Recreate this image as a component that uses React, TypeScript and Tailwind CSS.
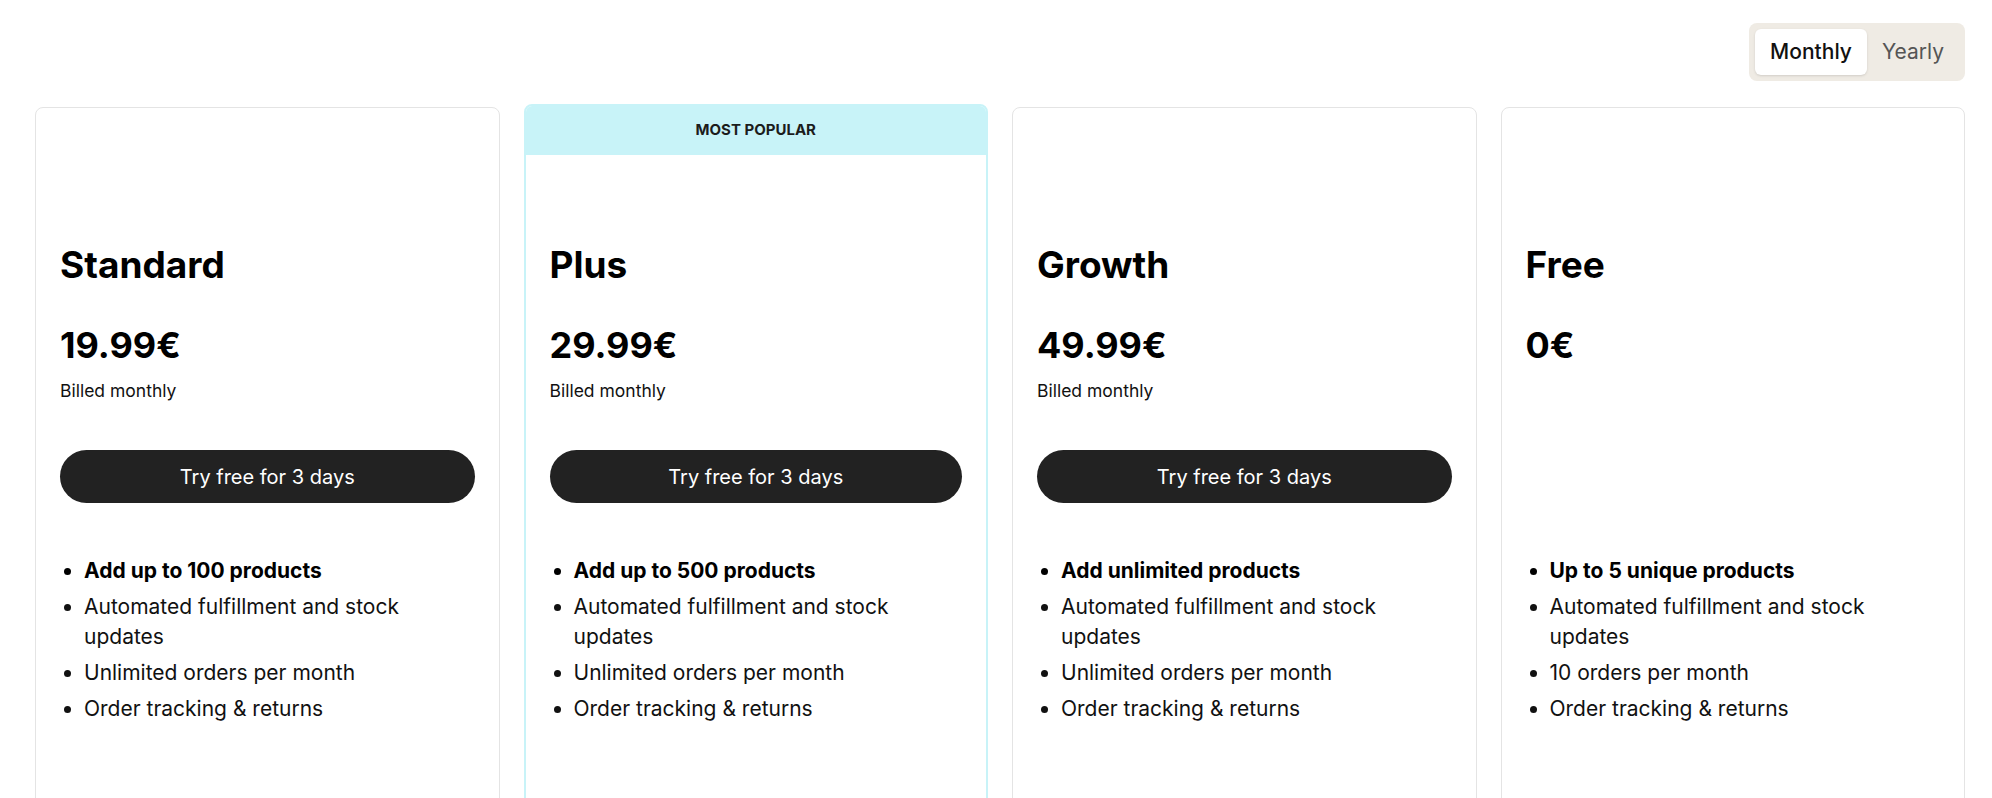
import React from "react";

type Plan = {
  name: string;
  price: string;
  billed?: string;
  cta?: string;
  popular?: boolean;
  features: { text: string; bold?: boolean }[];
};

const plans: Plan[] = [
  {
    name: "Standard",
    price: "19.99€",
    billed: "Billed monthly",
    cta: "Try free for 3 days",
    features: [
      { text: "Add up to 100 products", bold: true },
      { text: "Automated fulfillment and stock updates" },
      { text: "Unlimited orders per month" },
      { text: "Order tracking & returns" },
    ],
  },
  {
    name: "Plus",
    price: "29.99€",
    billed: "Billed monthly",
    cta: "Try free for 3 days",
    popular: true,
    features: [
      { text: "Add up to 500 products", bold: true },
      { text: "Automated fulfillment and stock updates" },
      { text: "Unlimited orders per month" },
      { text: "Order tracking & returns" },
    ],
  },
  {
    name: "Growth",
    price: "49.99€",
    billed: "Billed monthly",
    cta: "Try free for 3 days",
    features: [
      { text: "Add unlimited products", bold: true },
      { text: "Automated fulfillment and stock updates" },
      { text: "Unlimited orders per month" },
      { text: "Order tracking & returns" },
    ],
  },
  {
    name: "Free",
    price: "0€",
    features: [
      { text: "Up to 5 unique products", bold: true },
      { text: "Automated fulfillment and stock updates" },
      { text: "10 orders per month" },
      { text: "Order tracking & returns" },
    ],
  },
];

function PlanCard({ plan }: { plan: Plan }) {
  return (
    <div
      className={
        plan.popular
          ? "rounded-lg border-2 border-[#c8f3f8] bg-white overflow-hidden"
          : "mt-[3px] rounded-lg border border-[#e4e4e4] bg-white"
      }
    >
      {plan.popular ? (
        <div className="h-[49px] flex items-center justify-center bg-[#c8f3f8] text-[15px] font-bold text-[#1c1c1c]">
          MOST POPULAR
        </div>
      ) : (
        <div className="h-[47px]" />
      )}
      <div className="px-6 pt-[88px] pb-[120px]">
        <h2 className="text-[37px] leading-[44px] font-bold text-black">{plan.name}</h2>
        <div className="mt-9 text-[36px] leading-[44px] font-bold text-black">{plan.price}</div>
        <div className="mt-3 h-6 text-[17.5px] leading-6 text-[#111]">{plan.billed}</div>
        {plan.cta ? (
          <button className="mt-[47px] w-full h-[53px] rounded-full bg-[#222222] text-white text-[20px] flex items-center justify-center">
            {plan.cta}
          </button>
        ) : (
          <div className="mt-[47px] h-[53px]" />
        )}
        <ul className="mt-[53px] list-disc pl-6 flex flex-col gap-1.5 text-[21px] leading-[30px] text-[#111]">
          {plan.features.map((f) => (
            <li key={f.text} className={f.bold ? "font-bold text-black" : ""}>
              {f.text}
            </li>
          ))}
        </ul>
      </div>
    </div>
  );
}

export default function App() {
  return (
    <div className="min-h-screen bg-white overflow-hidden" style={{ fontFamily: "Inter, sans-serif" }}>
      <div className="ml-[35px] w-[1930px] pt-[23px]">
        <div className="flex justify-end">
          <div className="flex p-1.5 rounded-lg bg-[#efebe4]">
            <button className="h-[46px] px-[15px] rounded-md bg-white shadow-sm text-[21px] font-medium text-[#111]">
              Monthly
            </button>
            <button className="h-[46px] px-[15px] rounded-md text-[21px] text-[#555]">Yearly</button>
          </div>
        </div>
        <div className="mt-[23px] grid grid-cols-4 gap-6 items-start">
          {plans.map((p) => (
            <PlanCard key={p.name} plan={p} />
          ))}
        </div>
      </div>
    </div>
  );
}
